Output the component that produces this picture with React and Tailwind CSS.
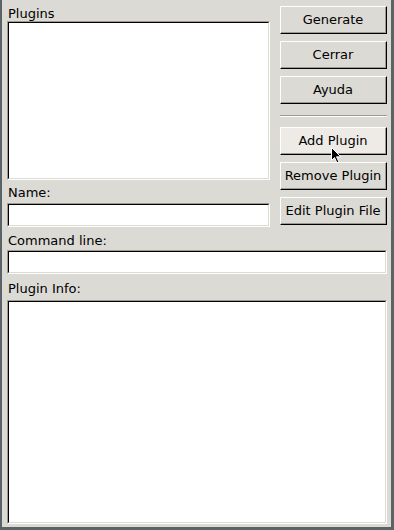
const sunken =
  "border-t border-l border-t-[#9e9a91] border-l-[#9e9a91] border-b border-r border-b-white border-r-white";
const sunkenInner =
  "border-t border-l border-t-black border-l-black border-b border-r border-b-[#dcdad5] border-r-[#dcdad5] bg-white";

function Sunken({ className }) {
  return (
    <div className={`${sunken} ${className}`}>
      <div className={`${sunkenInner} w-full h-full`} />
    </div>
  );
}

function Btn({ label, hover }) {
  return (
    <div className="relative border-t border-l border-t-white border-l-white border-b border-r border-b-black border-r-black h-[28px]">
      <div
        className={`h-full border-b border-r border-b-[#9e9a91] border-r-[#9e9a91] flex items-center justify-center text-[13px] text-black ${
          hover ? "bg-[#eeebe7]" : "bg-[#dcdad5]"
        }`}
      >
        {label}
      </div>
      {hover && (
        <svg
          className="absolute left-[50px] top-[19px]"
          width="12"
          height="18"
          viewBox="0 0 12 18"
        >
          <path
            d="M0.5 0.5 L0.5 13.5 L3.5 10.5 L6 16 L8 15 L5.5 9.8 L9.8 9.8 Z"
            fill="black"
            stroke="white"
            strokeWidth="1"
          />
        </svg>
      )}
    </div>
  );
}

export default function App() {
  return (
    <div
      className="w-[394px] h-[530px] bg-[#5c6366] pl-[2px] pr-[3px] pb-[3px]"
      style={{ fontFamily: '"DejaVu Sans", sans-serif' }}
    >
      <div className="w-full h-full bg-[#dcdad5] flex flex-col pl-[5px] pr-[4px] text-[13px] text-black leading-none">
        <div className="flex gap-[10px]">
          <div className="w-[263px] flex flex-col">
            <div className="pt-[7px] h-[21px] pl-[1px]">Plugins</div>
            <Sunken className="h-[159px]" />
            <div className="pt-[6px] h-[23px] pl-[1px]">Name:</div>
            <Sunken className="h-[24px]" />
          </div>
          <div className="flex-1 flex flex-col pt-[6px]">
            <div className="flex flex-col gap-[7px]">
              <Btn label="Generate" />
              <Btn label="Cerrar" />
              <Btn label="Ayuda" />
            </div>
            <div className="mt-[11px] h-[2px] border-t border-t-[#9e9a91] border-b border-b-white" />
            <div className="mt-[10px] flex flex-col gap-[7px]">
              <Btn label="Add Plugin" hover />
              <Btn label="Remove Plugin" />
              <Btn label="Edit Plugin File" />
            </div>
          </div>
        </div>
        <div className="pt-[7px] h-[23px] pl-[1px]">Command line:</div>
        <Sunken className="h-[24px]" />
        <div className="pt-[8px] h-[26px] pl-[1px]">Plugin Info:</div>
        <Sunken className="flex-1 mb-[3px]" />
      </div>
    </div>
  );
}
